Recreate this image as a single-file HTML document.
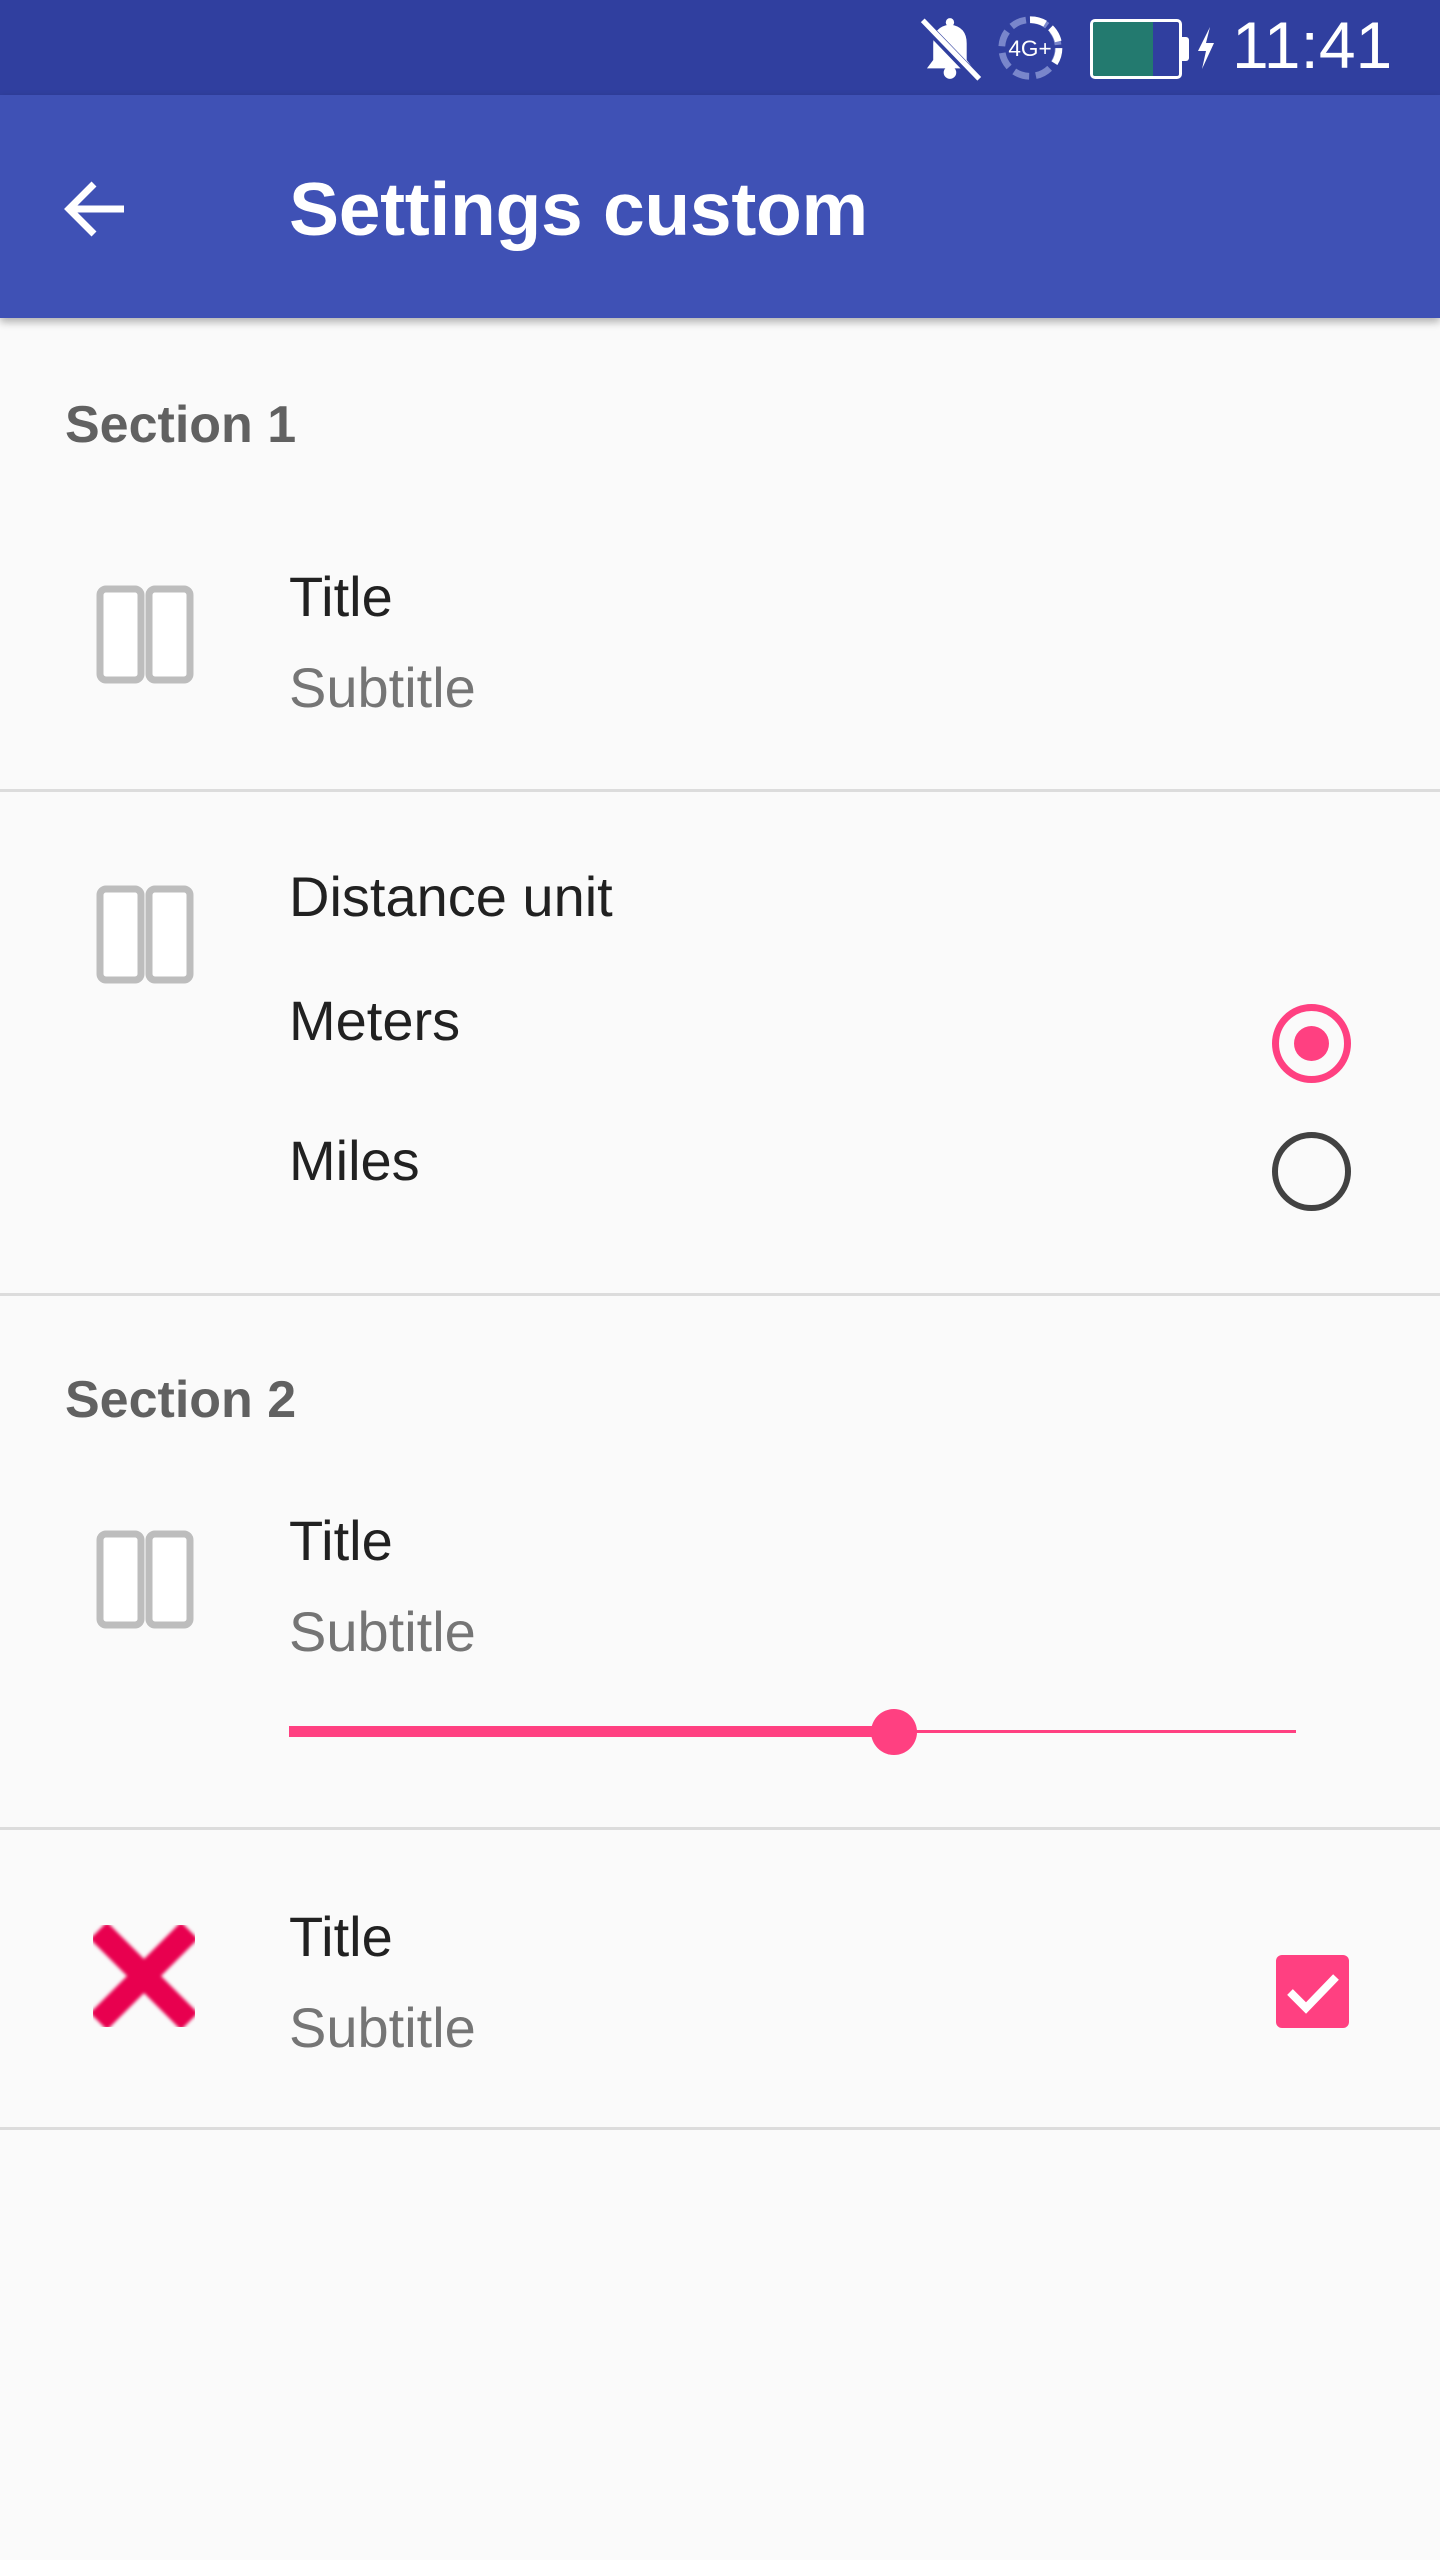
<!DOCTYPE html>
<html><head><meta charset="utf-8"><style>
*{margin:0;padding:0;box-sizing:border-box}
body{width:1440px;height:2560px;background:#fafafa;font-family:"Liberation Sans",sans-serif;position:relative;overflow:hidden}
.abs{position:absolute}
.t{position:absolute;left:289px;font-size:56px;color:#212121;line-height:1;transform:translateY(-50%)}
.s{color:#757575}
.sec{position:absolute;left:65px;font-size:52px;font-weight:bold;color:#616161;transform:translateY(-50%);line-height:1}
.div{position:absolute;left:0;width:1440px;height:3px;background:#dcdcdc}
</style></head><body>
<div class="abs" style="left:0;top:0;width:1440px;height:95px;background:#303f9f"></div>
<div class="abs" style="left:0;top:95px;width:1440px;height:223px;background:#3f51b5;box-shadow:0 4px 8px rgba(0,0,0,.3)"></div>
<!-- status icons -->
<svg class="abs" style="left:914px;top:14px" width="74" height="68" viewBox="0 0 70 65"><path d="M12 52 L56 52 L50 44 L50 28 Q50 12 34 10 Q18 12 18 28 L18 44 Z" fill="#fff"/><circle cx="34" cy="56" r="6" fill="#fff"/><circle cx="34" cy="8" r="4" fill="#fff"/><path d="M6 6 L60 62" stroke="#303f9f" stroke-width="9"/><path d="M8 6 L62 62" stroke="#fff" stroke-width="5"/></svg>
<svg class="abs" style="left:996px;top:13px" width="68" height="70" viewBox="0 0 60 62"><circle cx="30" cy="31" r="25" fill="none" stroke="#7986cb" stroke-width="6" stroke-dasharray="14 6"/><path d="M30 6 A25 25 0 0 1 48 49" fill="none" stroke="#fff" stroke-width="6" stroke-dasharray="14 6"/><text x="30" y="38" font-size="20" fill="#fff" text-anchor="middle" font-family="Liberation Sans">4G+</text></svg>
<div class="abs" style="left:1090px;top:19px;width:92px;height:60px;border:3px solid #fff;border-radius:5px;background:#303f9f;overflow:hidden"><div style="width:60px;height:100%;background:#237a6f"></div></div>
<div class="abs" style="left:1182px;top:37px;width:7px;height:24px;background:#fff;border-radius:0 3px 3px 0"></div>
<svg class="abs" style="left:1196px;top:25px" width="20" height="46" viewBox="0 0 20 46"><path d="M14 2 L2 26 L10 26 L6 44 L18 18 L10 18 Z" fill="#fff"/></svg>
<div class="abs" style="left:1232px;top:12px;font-size:66px;color:#fff;line-height:1">11:41</div>
<!-- app bar -->
<svg class="abs" style="left:62px;top:178px" width="66" height="62" viewBox="0 0 66 62"><path d="M62 31 H8 M32 6 L7 31 L32 56" stroke="#fff" stroke-width="7" fill="none"/></svg>
<div class="abs" style="left:289px;top:172px;font-size:75px;font-weight:bold;color:#fff;line-height:1;letter-spacing:-0.3px">Settings custom</div>
<!-- section 1 -->
<div class="sec" style="top:425px">Section 1</div>
<svg class="abs" style="left:96px;top:585px" width="98" height="100" viewBox="0 0 98 100"><rect x="4" y="4" width="41" height="91" rx="6" fill="#fff" stroke="#bdbdbd" stroke-width="7"/><rect x="53" y="4" width="41" height="91" rx="6" fill="#fff" stroke="#bdbdbd" stroke-width="7"/></svg>
<div class="t" style="top:597px">Title</div>
<div class="t s" style="top:688px">Subtitle</div>
<div class="div" style="top:789px"></div>
<svg class="abs" style="left:96px;top:885px" width="98" height="100" viewBox="0 0 98 100"><rect x="4" y="4" width="41" height="91" rx="6" fill="#fff" stroke="#bdbdbd" stroke-width="7"/><rect x="53" y="4" width="41" height="91" rx="6" fill="#fff" stroke="#bdbdbd" stroke-width="7"/></svg>
<div class="t" style="top:897px">Distance unit</div>
<div class="t" style="top:1021px">Meters</div>
<div class="t" style="top:1161px">Miles</div>
<div class="abs" style="left:1272px;top:1004px;width:79px;height:79px;border:7px solid #ff4081;border-radius:50%"><div style="position:absolute;left:15px;top:15px;width:35px;height:35px;border-radius:50%;background:#ff4081"></div></div>
<div class="abs" style="left:1272px;top:1132px;width:79px;height:79px;border:6px solid #424242;border-radius:50%"></div>
<div class="div" style="top:1293px"></div>
<div class="sec" style="top:1400px">Section 2</div>
<svg class="abs" style="left:96px;top:1530px" width="98" height="100" viewBox="0 0 98 100"><rect x="4" y="4" width="41" height="91" rx="6" fill="#fff" stroke="#bdbdbd" stroke-width="7"/><rect x="53" y="4" width="41" height="91" rx="6" fill="#fff" stroke="#bdbdbd" stroke-width="7"/></svg>
<div class="t" style="top:1541px">Title</div>
<div class="t s" style="top:1632px">Subtitle</div>
<div class="abs" style="left:289px;top:1726px;width:604px;height:11px;background:#ff4081"></div>
<div class="abs" style="left:893px;top:1730px;width:403px;height:3px;background:#ff4081"></div>
<div class="abs" style="left:871px;top:1709px;width:46px;height:46px;border-radius:50%;background:#ff4081"></div>
<div class="div" style="top:1827px"></div>
<svg class="abs" style="left:93px;top:1925px" width="102" height="102" viewBox="0 0 102 102"><path d="M14 14 L88 88 M88 14 L14 88" stroke="#e8004f" stroke-width="24" stroke-linecap="square" style="filter:blur(1.5px)"/></svg>
<div class="t" style="top:1937px">Title</div>
<div class="t s" style="top:2028px">Subtitle</div>
<div class="abs" style="left:1276px;top:1955px;width:73px;height:73px;background:#ff4081;border-radius:6px"></div>
<svg class="abs" style="left:1276px;top:1955px" width="73" height="73" viewBox="0 0 73 73"><path d="M14 37 L30 53 L60 22" stroke="#fff" stroke-width="8" fill="none"/></svg>
<div class="div" style="top:2127px"></div>
</body></html>
